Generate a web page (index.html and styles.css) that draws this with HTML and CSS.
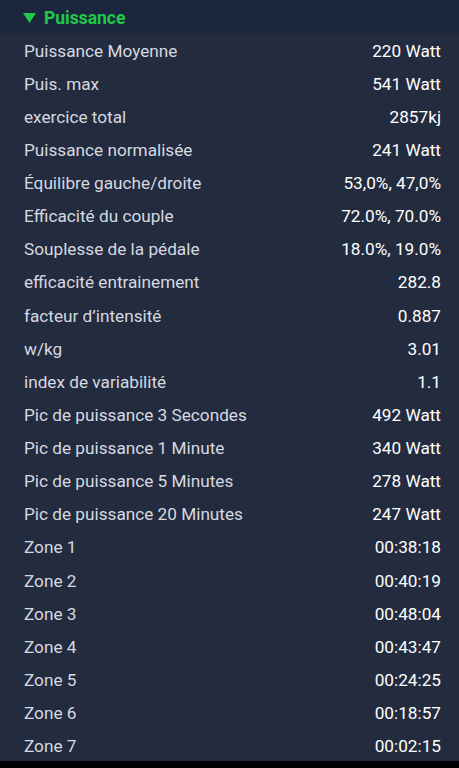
FILE: index.html
```html
<!DOCTYPE html>
<html lang="fr">
<head>
  <meta charset="UTF-8">
  <meta name="viewport" content="width=device-width, initial-scale=1.0">
  <title>Puissance</title>
  <link rel="stylesheet" href="styles.css">
</head>
<body>

  <div class="section">
    <!-- En-tête de la section -->
    <div class="section-header">
      <svg class="arrow" width="13" height="10" viewBox="0 0 13 10"><polygon points="0,0 13,0 6.5,10" fill="#1fc94a"/></svg>
      <span>Puissance</span>
    </div>

    <div class="rows">
      <div class="row"><span class="label">Puissance Moyenne</span><span class="value">220 Watt</span></div>
      <div class="row"><span class="label">Puis. max</span><span class="value">541 Watt</span></div>
      <div class="row"><span class="label">exercice total</span><span class="value">2857kj</span></div>
      <div class="row"><span class="label">Puissance normalisée</span><span class="value">241 Watt</span></div>
      <div class="row"><span class="label">Équilibre gauche/droite</span><span class="value">53,0%, 47,0%</span></div>
      <div class="row"><span class="label">Efficacité du couple</span><span class="value">72.0%, 70.0%</span></div>
      <div class="row"><span class="label">Souplesse de la pédale</span><span class="value">18.0%, 19.0%</span></div>
      <div class="row"><span class="label">efficacité entrainement</span><span class="value">282.8</span></div>
      <div class="row"><span class="label">facteur d’intensité</span><span class="value">0.887</span></div>
      <div class="row"><span class="label">w/kg</span><span class="value">3.01</span></div>
      <div class="row"><span class="label">index de variabilité</span><span class="value">1.1</span></div>
      <div class="row"><span class="label">Pic de puissance 3 Secondes</span><span class="value">492 Watt</span></div>
      <div class="row"><span class="label">Pic de puissance 1 Minute</span><span class="value">340 Watt</span></div>
      <div class="row"><span class="label">Pic de puissance 5 Minutes</span><span class="value">278 Watt</span></div>
      <div class="row"><span class="label">Pic de puissance 20 Minutes</span><span class="value">247 Watt</span></div>
      <div class="row"><span class="label">Zone 1</span><span class="value">00:38:18</span></div>
      <div class="row"><span class="label">Zone 2</span><span class="value">00:40:19</span></div>
      <div class="row"><span class="label">Zone 3</span><span class="value">00:48:04</span></div>
      <div class="row"><span class="label">Zone 4</span><span class="value">00:43:47</span></div>
      <div class="row"><span class="label">Zone 5</span><span class="value">00:24:25</span></div>
      <div class="row"><span class="label">Zone 6</span><span class="value">00:18:57</span></div>
      <div class="row"><span class="label">Zone 7</span><span class="value">00:02:15</span></div>
    </div>
  </div>

</body>
</html>
```

FILE: styles.css
```css
body {
  margin: 0;
  background-color: #000000;
  font-family: Roboto, 'Liberation Sans', sans-serif;
  height: 768px;
  overflow: hidden;
}

.section {
  background-color: #232b3e;
  height: 761px;
  overflow: hidden;
}

.section-header {
  height: 33px;
  box-sizing: border-box;
  padding-top: 3px;
  background-color: #1b253d;
  display: flex;
  align-items: center;
  padding-left: 23px;
  color: #1fc94a;
  font-size: 17.5px;
  font-weight: bold;
}

.arrow {
  margin-right: 8px;
  margin-top: -1px;
}

.rows {
  padding: 1px 18px 0 24px;
}

.row {
  height: 33.14px;
  display: flex;
  justify-content: space-between;
  align-items: center;
  font-size: 17.2px;
}

.label {
  color: #d6d9e0;
}

.value {
  color: #ffffff;
}
```
